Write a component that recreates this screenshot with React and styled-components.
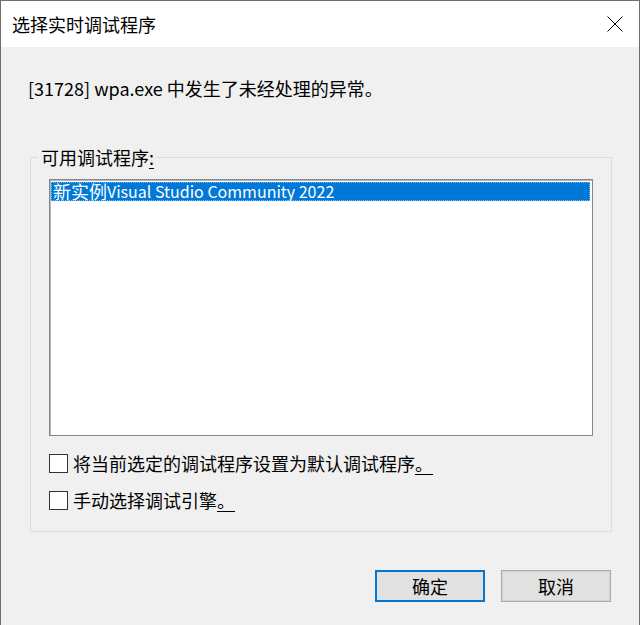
import React from "react";
import styled, { createGlobalStyle } from "styled-components";

const Global = createGlobalStyle`
  html, body { margin: 0; padding: 0; background: #f0f0f0; }
  body { font-family: "Noto Sans CJK SC", "Noto Sans", sans-serif; }
  * { box-sizing: border-box; }
`;

const Window = styled.div`
  width: 640px;
  height: 625px;
  display: flex;
  flex-direction: column;
  background: #f0f0f0;
  border: 1px solid #6e6e6e;
  border-bottom: none;
  overflow: hidden;
`;

const TitleBar = styled.div`
  height: 46px;
  flex: none;
  display: flex;
  align-items: center;
  justify-content: space-between;
  background: #ffffff;
  padding: 0 16px 0 11px;
`;

const Title = styled.span`
  font-size: 18px;
  line-height: 22px;
  color: #000;
`;

const CloseIcon = styled.svg`
  width: 16px;
  height: 16px;
  display: block;
`;

const Body = styled.div`
  flex: 1;
  display: flex;
  flex-direction: column;
  padding: 30px 27px 0 27px;
`;

const Message = styled.div`
  font-size: 18px;
  line-height: 22px;
  color: #000;
  white-space: nowrap;
`;

const Latin = styled.span`
  font-size: ${(p) => p.$size || 18}px;
`;

const Group = styled.fieldset`
  margin: 47px 0 0 2px;
  padding: 0;
  border: 1px solid #dcdcdc;
  min-width: 0;
  width: 582px;
`;

const Legend = styled.legend`
  margin-left: 7px;
  padding: 0 3px;
  font-size: 18px;
  line-height: 22px;
  color: #000;
`;

const GroupContent = styled.div`
  display: flex;
  flex-direction: column;
  padding: 0 0 20px 18px;
`;

const ListBox = styled.div`
  margin-top: 11px;
  width: 544px;
  height: 257px;
  background: #fff;
  border: 1px solid #828790;
  box-shadow: inset 1px 1px 0 #b9b9b9;
  padding: 2px 2px 0 1px;
`;

const ListItem = styled.div`
  height: 19px;
  display: flex;
  align-items: center;
  padding-left: 2px;
  white-space: nowrap;
  background: ${(p) => (p.$selected ? "#0078d7" : "transparent")};
  color: ${(p) => (p.$selected ? "#fff" : "#000")};
  outline: ${(p) => (p.$selected ? "1px dotted #7fb8ea" : "none")};
  outline-offset: -1px;
  font-size: 18px;
  line-height: 19px;
`;

const CheckRow = styled.label`
  display: flex;
  align-items: center;
  gap: 5px;
  margin-top: ${(p) => p.$top}px;
  font-size: 18px;
  line-height: 22px;
  color: #000;
`;

const Box = styled.span`
  width: 19px;
  height: 19px;
  flex: none;
  background: #fff;
  border: 1px solid #333;
`;

const Mnemonic = styled.u`
  text-decoration: underline;
  text-underline-offset: 3px;
  padding-right: ${(p) => (p.$tight ? 0 : 6)}px;
`;

const Buttons = styled.div`
  display: flex;
  justify-content: flex-end;
  gap: 16px;
  margin-top: 38px;
  padding-right: 1px;
`;

const Button = styled.button`
  width: 110px;
  height: 32px;
  background: #e1e1e1;
  border: ${(p) => (p.$default ? "2px solid #0078d7" : "1px solid #adadad")};
  box-shadow: ${(p) => (p.$default ? "none" : "inset 0 0 0 1px #d5d5d5")};
  font-family: "Noto Sans CJK SC", sans-serif;
  font-size: 18px;
  line-height: 22px;
  color: #000;
  padding: 0;
`;

export default function App() {
  return (
    <>
      <Global />
      <Window>
        <TitleBar>
          <Title>选择实时调试程序</Title>
          <CloseIcon viewBox="0 0 16 16">
            <path d="M0.5 0.5 L15.5 15.5 M15.5 0.5 L0.5 15.5" stroke="#000" strokeWidth="1" fill="none" />
          </CloseIcon>
        </TitleBar>
        <Body>
          <Message>
            <Latin>[31728] wpa.exe </Latin>中发生了未经处理的异常。
          </Message>
          <Group>
            <Legend>
              可用调试程序<Mnemonic $tight>:</Mnemonic>
            </Legend>
            <GroupContent>
              <ListBox>
                <ListItem $selected>
                  新实例<Latin $size={16}>Visual Studio Community 2022</Latin>
                </ListItem>
              </ListBox>
              <CheckRow $top={16}>
                <Box />
                <span>
                  将当前选定的调试程序设置为默认调试程序<Mnemonic>。</Mnemonic>
                </span>
              </CheckRow>
              <CheckRow $top={15}>
                <Box />
                <span>
                  手动选择调试引擎<Mnemonic>。</Mnemonic>
                </span>
              </CheckRow>
            </GroupContent>
          </Group>
          <Buttons>
            <Button $default>确定</Button>
            <Button>取消</Button>
          </Buttons>
        </Body>
      </Window>
    </>
  );
}
